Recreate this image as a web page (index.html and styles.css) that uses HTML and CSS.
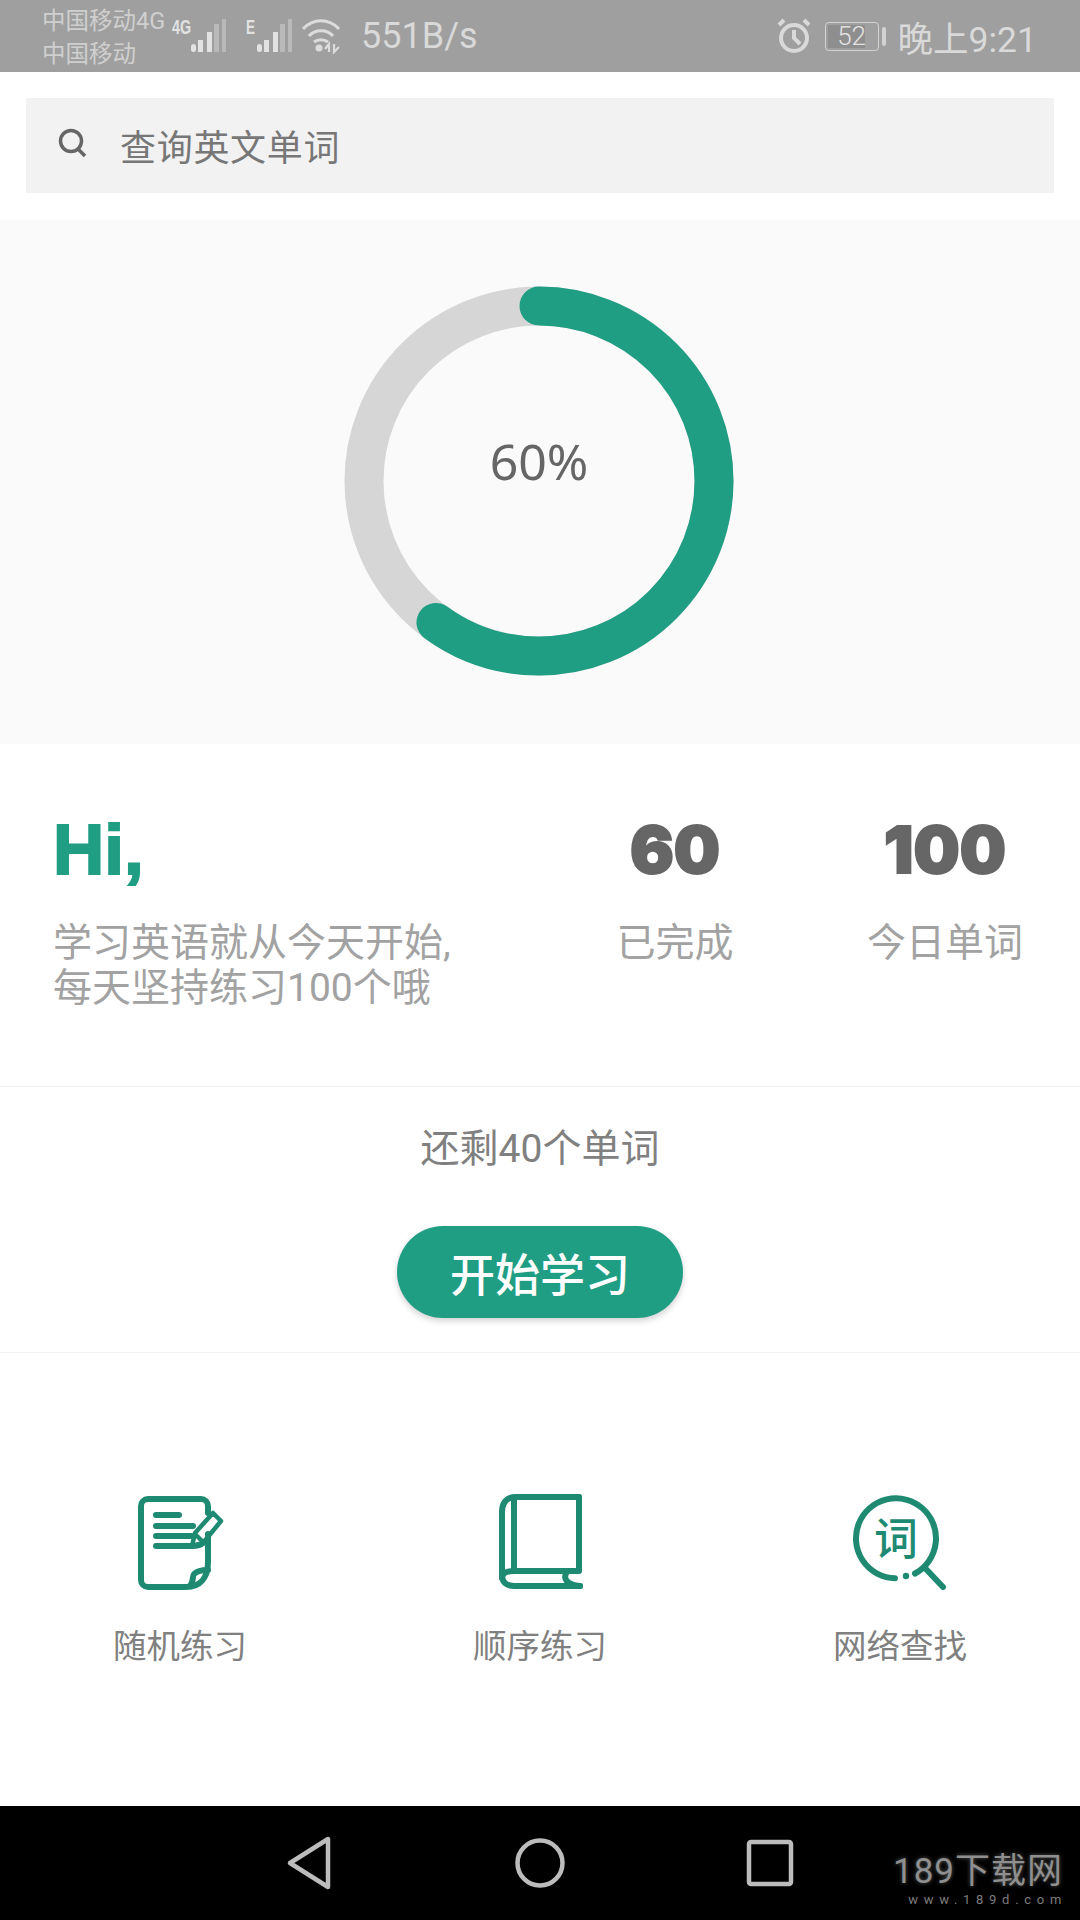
FILE: index.html
```html
<!DOCTYPE html>
<html lang="zh-CN">
<head>
    <meta charset="UTF-8">
    <title>单词学习</title>
    <link rel="stylesheet" href="styles.css">
</head>
<body>
    <div class="page">
        <div class="status-bar">
            <div class="carrier">
                <div>中国移动4G</div>
                <div>中国移动</div>
            </div>
            <svg class="sim" width="54" height="72" viewBox="0 0 54 72">
                <text x="0" y="34" class="sim-label" textLength="19" lengthAdjust="spacingAndGlyphs">4G</text>
                <rect x="19" y="44" width="5" height="8" rx="2.5" class="bar-on"/>
                <rect x="26" y="40" width="5" height="12" class="bar-on"/>
                <rect x="35" y="32" width="5" height="20" class="bar-on"/>
                <rect x="42" y="24" width="5" height="28" class="bar-off"/>
                <rect x="50" y="19" width="4" height="33" class="bar-off"/>
            </svg>
            <svg class="sim sim-2" width="46" height="72" viewBox="0 0 46 72">
                <text x="0" y="34" class="sim-label" textLength="9" lengthAdjust="spacingAndGlyphs">E</text>
                <rect x="11" y="44" width="5" height="8" rx="2.5" class="bar-on"/>
                <rect x="18" y="40" width="5" height="12" class="bar-on"/>
                <rect x="27" y="32" width="5" height="20" class="bar-on"/>
                <rect x="34" y="24" width="5" height="28" class="bar-off"/>
                <rect x="42" y="19" width="4" height="33" class="bar-off"/>
            </svg>
            <svg class="wifi" width="38" height="72" viewBox="0 0 38 72">
                <path d="M1 29 C11 18 27 18 37 29" />
                <path d="M7 36 C13 29 25 29 31 36" />
                <path d="M12 42 C16 39 22 39 26 42" />
                <circle cx="17" cy="48" r="3.5" class="wifi-dot"/>
                <path d="M27 52 V44 L23 49 M32 44 V52 L37 47" class="wifi-arrows"/>
            </svg>
            <div class="speed">551B/s</div>
            <div class="status-right">
                <svg class="alarm" width="34" height="36" viewBox="0 0 34 36">
                    <circle cx="17" cy="20" r="13"/>
                    <path d="M17 12 V20 L23 26"/>
                    <path d="M2 7 L7 2 M27 2 L32 7"/>
                </svg>
                <div class="battery">
                    <div class="battery-body">
                        <div class="battery-fill"></div>
                        <span>52</span>
                    </div>
                    <div class="battery-nub"></div>
                </div>
                <div class="clock">晚上9:21</div>
            </div>
        </div>

        <div class="search-wrap">
            <div class="search-box">
                <svg class="search-icon" width="32" height="32" viewBox="0 0 32 32">
                    <circle cx="14" cy="14" r="10.5"/>
                    <path d="M21 22 L28 29"/>
                </svg>
                <span>查询英文单词</span>
            </div>
        </div>

        <div class="progress-panel">
            <svg class="ring" width="400" height="400" viewBox="0 0 400 400">
                <circle cx="200" cy="200" r="175" class="ring-track"/>
                <circle cx="200" cy="200" r="175" class="ring-value" stroke-dasharray="659.7 1099.6" transform="rotate(-90 200 200)"/>
                <text x="200" y="199" class="ring-label">60%</text>
            </svg>
        </div>

        <div class="stats">
            <div class="stats-intro">
                <div class="big hi">Hi,</div>
                <div class="stats-text">学习英语就从今天开始,<br>每天坚持练习100个哦</div>
            </div>
            <div class="stat">
                <div class="big num">60</div>
                <div class="stats-text">已完成</div>
            </div>
            <div class="stat">
                <div class="big num">100</div>
                <div class="stats-text">今日单词</div>
            </div>
        </div>

        <div class="start-panel">
            <div class="remain">还剩40个单词</div>
            <button class="start-btn">开始学习</button>
        </div>

        <div class="tools">
            <div class="tool">
                <svg class="tool-icon" width="100" height="100" viewBox="0 0 100 100">
                    <path d="M78 23 V16 a7 7 0 0 0 -7 -7 H18 a7 7 0 0 0 -7 7 V90 a7 7 0 0 0 7 7 H56 C70 97 78 88 78 72 V44"/>
                    <path d="M60 96 C64 92 62 86 64 84 C68 80 74 80 78 80"/>
                    <path d="M26 25 H49 M26 36 H63 M26 46 H62 M26 56 H62 C68 56 71 55 73 53"/>
                    <path d="M65 43 L83 23 L91 31 L73 53 L62 56 Z M65 44 L73 52" class="thin"/>
                </svg>
                <div class="tool-name">随机练习</div>
            </div>
            <div class="tool">
                <svg class="tool-icon" width="100" height="100" viewBox="0 0 100 100">
                    <path d="M89 7 H26 C16 7 12 13 12 22 V85 C12 92 16 96 24 96 H90"/>
                    <path d="M24 8 V80"/>
                    <path d="M89 7 V81 H24 C16 81 12 84 12 88"/>
                    <path d="M77 82 C73 87 75 95 90 96"/>
                </svg>
                <div class="tool-name">顺序练习</div>
            </div>
            <div class="tool">
                <svg class="tool-icon" width="100" height="100" viewBox="0 0 100 100">
                    <path d="M45 88.3 A40 40 0 1 1 65 83.5"/>
                    <circle cx="56" cy="86" r="3.2" class="icon-dot"/>
                    <path d="M75 78 L93 97"/>
                    <text x="46" y="65" class="icon-word">词</text>
                </svg>
                <div class="tool-name">网络查找</div>
            </div>
        </div>

        <div class="nav-bar">
            <svg width="60" height="60" viewBox="0 0 60 60">
                <path d="M10 30 L48 6 V54 Z"/>
            </svg>
            <svg width="60" height="60" viewBox="0 0 60 60">
                <circle cx="30" cy="30" r="22.5"/>
            </svg>
            <svg width="60" height="60" viewBox="0 0 60 60">
                <rect x="9" y="9" width="42" height="42" rx="2"/>
            </svg>
            <div class="watermark">
                <div class="wm-title">189下载网</div>
                <div class="wm-url">www.189d.com</div>
            </div>
        </div>
    </div>
</body>
</html>
```

FILE: styles.css
```css
* {
    box-sizing: border-box;
}
body {
    margin: 0;
    background: white;
    font-family: Roboto, "Noto Sans CJK SC", sans-serif;
}
.page {
    width: 1080px;
    height: 1920px;
    display: flex;
    flex-direction: column;
    overflow: hidden;
}

/* status bar */
.status-bar {
    height: 72px;
    background: #9f9f9f;
    color: #d9d9d9;
    display: flex;
    align-items: center;
    padding: 0 43px 0 42px;
}
.carrier {
    width: 130px;
    padding-top: 4px;
    font-size: 23.5px;
    line-height: 33px;
    white-space: nowrap;
    color: #cfcfcf;
}
.sim-label {
    font-family: "Liberation Sans", sans-serif;
    font-weight: bold;
    font-size: 20px;
    fill: #e2e2e2;
}
.bar-on {
    fill: #e2e2e2;
}
.bar-off {
    fill: #b9b9b9;
}
.sim-2 {
    margin-left: 20px;
}
.wifi {
    margin-left: 10px;
}
.wifi path {
    fill: none;
    stroke: #dcdcdc;
    stroke-width: 3.2;
}
.wifi .wifi-arrows {
    stroke-width: 2.2;
}
.wifi-dot {
    fill: #dcdcdc;
}
.speed {
    margin-left: 21px;
    font-size: 36px;
}
.status-right {
    margin-left: auto;
    display: flex;
    align-items: center;
}
.alarm {
    fill: none;
    stroke: #d9d9d9;
    stroke-width: 4;
}
.battery {
    margin-left: 14px;
    display: flex;
    align-items: center;
}
.battery-body {
    position: relative;
    width: 54px;
    height: 29px;
    border: 1.5px solid #d2d2d2;
    border-radius: 4px;
    font-size: 26px;
    font-weight: 300;
    line-height: 26px;
    text-align: center;
    color: #e2e2e2;
}
.battery-fill {
    position: absolute;
    left: 2px;
    top: 2px;
    bottom: 2px;
    width: 37px;
    background: #8e8e8e;
}
.battery-body span {
    position: relative;
}
.battery-nub {
    width: 4px;
    height: 19px;
    margin-left: 3px;
    background: #d2d2d2;
    border-radius: 2px;
}
.clock {
    margin-left: 12px;
    font-size: 35.5px;
}

/* search */
.search-wrap {
    padding: 26px 26px 27px;
}
.search-box {
    height: 95px;
    background: #f2f2f2;
    display: flex;
    align-items: center;
    padding-left: 31px;
    padding-bottom: 2px;
    font-size: 36px;
    color: #777;
}
.search-box span {
    margin-left: 31px;
    letter-spacing: 0.7px;
}
.search-icon {
    fill: none;
    stroke: #666;
    stroke-width: 3.5;
    margin-top: -3px;
}

/* progress ring */
.progress-panel {
    height: 524px;
    padding: 0 2px 2px 0;
    background: #fafafa;
    display: flex;
    justify-content: center;
    align-items: center;
}
.ring-track,
.ring-value {
    fill: none;
    stroke-width: 39;
}
.ring-track {
    stroke: #d6d6d6;
}
.ring-value {
    stroke: #1f9e84;
    stroke-linecap: round;
}
.ring-label {
    font-family: "Noto Sans", sans-serif;
    font-size: 50px;
    fill: #666;
    text-anchor: middle;
}

/* stats */
.stats {
    height: 343px;
    border-bottom: 1px solid #f3f3f3;
    padding-top: 65px;
    display: grid;
    grid-template-columns: 540px 270px 270px;
}
.stats-intro {
    padding-left: 53px;
}
.big {
    height: 82px;
    font-family: "Liberation Sans", sans-serif;
    font-weight: bold;
    font-size: 71px;
    line-height: 82px;
    -webkit-text-stroke: 2px currentColor;
}
.hi {
    color: #1f9e84;
}
.num {
    color: #666;
    font-family: Inter, sans-serif;
    font-weight: 900;
    font-size: 65px;
    -webkit-text-stroke: 2px currentColor;
}
.stat {
    text-align: center;
}
.stats-text {
    margin-top: 30px;
    font-size: 39px;
    line-height: 45px;
    color: #a2a2a2;
}

/* start button */
.start-panel {
    height: 266px;
    border-bottom: 1px solid #f3f3f3;
    padding-top: 40px;
    display: flex;
    flex-direction: column;
    align-items: center;
}
.remain {
    font-size: 39px;
    line-height: 44px;
    color: #808080;
}
.start-btn {
    width: 286px;
    height: 92px;
    margin-top: 55px;
    border: none;
    border-radius: 46px;
    background: #1f9e84;
    box-shadow: 0 3px 6px rgba(0, 0, 0, 0.18);
    color: white;
    font-family: inherit;
    font-size: 45px;
    font-weight: 500;
}

/* tools */
.tools {
    flex: 1;
    padding-top: 137px;
    display: grid;
    grid-template-columns: repeat(3, 360px);
    align-content: start;
}
.tool {
    display: flex;
    flex-direction: column;
    align-items: center;
}
.tool-icon {
    fill: none;
    stroke: #1f8a72;
    stroke-width: 6;
    stroke-linecap: round;
    stroke-linejoin: round;
}
.tool-icon .thin {
    stroke-width: 4.5;
}
.icon-dot {
    fill: #1f8a72;
    stroke: none;
}
.icon-word {
    fill: #1f8a72;
    stroke: none;
    font-family: "Noto Sans CJK SC", sans-serif;
    font-weight: 500;
    font-size: 44px;
    text-anchor: middle;
}
.tool-name {
    margin-top: 37px;
    font-size: 33.5px;
    line-height: 40px;
    color: #808080;
}

/* navigation bar */
.nav-bar {
    position: relative;
    height: 114px;
    background: black;
    display: flex;
    justify-content: center;
    align-items: center;
    gap: 170px;
}
.nav-bar svg {
    fill: none;
    stroke: #bcbcbc;
    stroke-width: 4.5;
    stroke-linejoin: round;
}
.watermark {
    position: absolute;
    right: 17px;
    top: 46px;
    color: #8f8f8f;
    text-align: right;
}
.wm-title {
    font-size: 35px;
    line-height: 40px;
    letter-spacing: 1px;
    text-shadow: 0 0 4px rgba(255, 255, 255, 0.35);
}
.wm-url {
    font-size: 13px;
    line-height: 16px;
    letter-spacing: 5.7px;
    margin-right: -4px;
    color: #7c7c7c;
}
```
